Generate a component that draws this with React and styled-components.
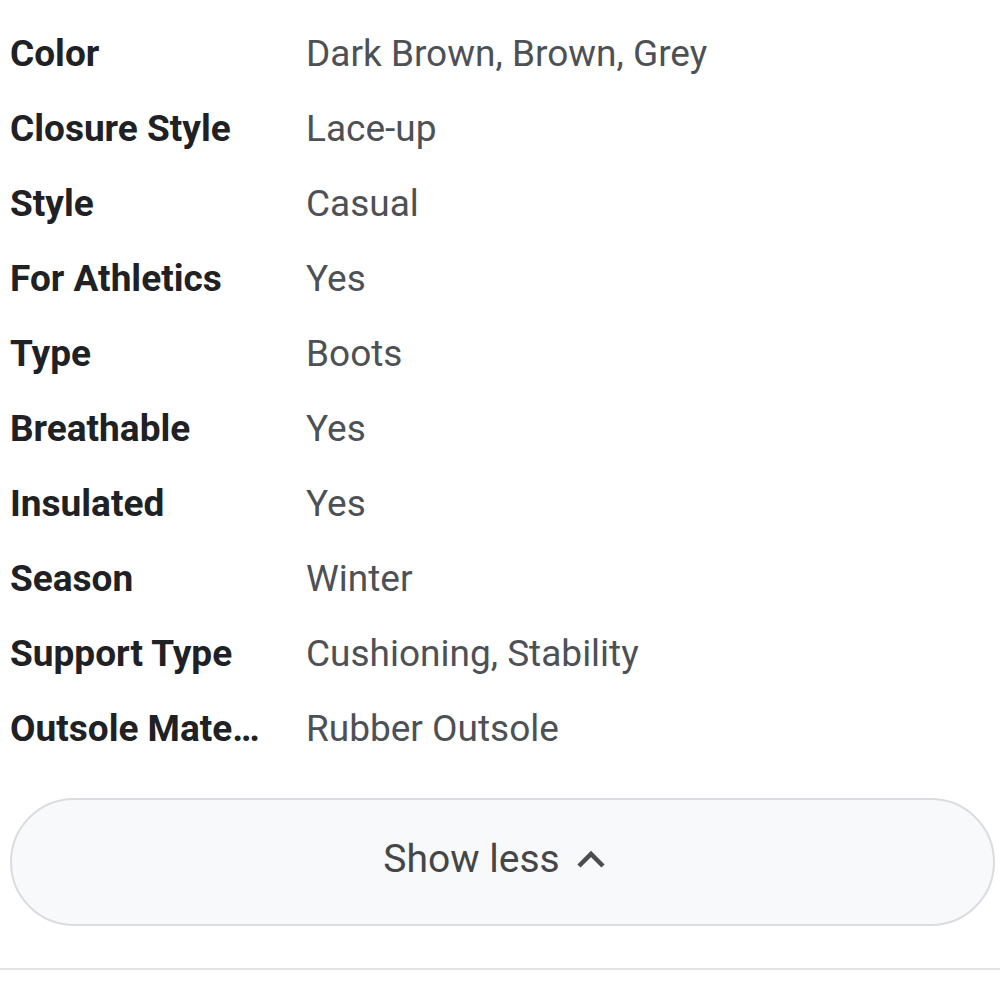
import React from 'react';
import styled, { createGlobalStyle } from 'styled-components';

const Global = createGlobalStyle`
  body {
    margin: 0;
    background: #fff;
    font-family: Roboto, "Liberation Sans", sans-serif;
  }
`;

const specs = [
  ['Color', 'Dark Brown, Brown, Grey'],
  ['Closure Style', 'Lace-up'],
  ['Style', 'Casual'],
  ['For Athletics', 'Yes'],
  ['Type', 'Boots'],
  ['Breathable', 'Yes'],
  ['Insulated', 'Yes'],
  ['Season', 'Winter'],
  ['Support Type', 'Cushioning, Stability'],
  ['Outsole Material', 'Rubber Outsole'],
];

function App() {
  return (
    <Page>
      <Global />
      <Table>
        {specs.map(([label, value]) => (
          <Row key={label}>
            <Label>{label}</Label>
            <Value>{value}</Value>
          </Row>
        ))}
      </Table>
      <ToggleButton>
        Show less
        <svg width="30" height="20" viewBox="0 0 30 20">
          <path d="M3 17 L15 5 L27 17" fill="none" stroke="#4d4d4d" strokeWidth="4.5" />
        </svg>
      </ToggleButton>
      <Divider />
    </Page>
  );
}

const Page = styled.div`
  width: 1000px;
  height: 999px;
  padding: 16px 5px 0 10px;
  box-sizing: border-box;
  overflow: hidden;
`;

const Table = styled.div`
  display: flex;
  flex-direction: column;
`;

const Row = styled.div`
  display: grid;
  grid-template-columns: 296px 1fr;
  height: 75px;
  align-items: center;
`;

const Label = styled.div`
  font-size: 37px;
  font-weight: 700;
  color: #202124;
  white-space: nowrap;
  overflow: hidden;
  text-overflow: ellipsis;
  padding-right: 34px;
`;

const Value = styled.div`
  font-size: 37px;
  color: #4d5156;
`;

const ToggleButton = styled.button`
  margin-top: 32px;
  width: 985px;
  height: 128px;
  box-sizing: border-box;
  border: 2px solid #dadce0;
  border-radius: 64px;
  background: #f8f9fa;
  display: flex;
  align-items: center;
  justify-content: center;
  gap: 16px;
  font-family: Roboto, "Liberation Sans", sans-serif;
  font-size: 39px;
  color: #444746;
  padding: 0 16px 6px 0;
`;

const Divider = styled.div`
  margin: 42px 0 0 -10px;
  width: 1010px;
  height: 2px;
  background: #e3e3e3;
`;

export default App;
